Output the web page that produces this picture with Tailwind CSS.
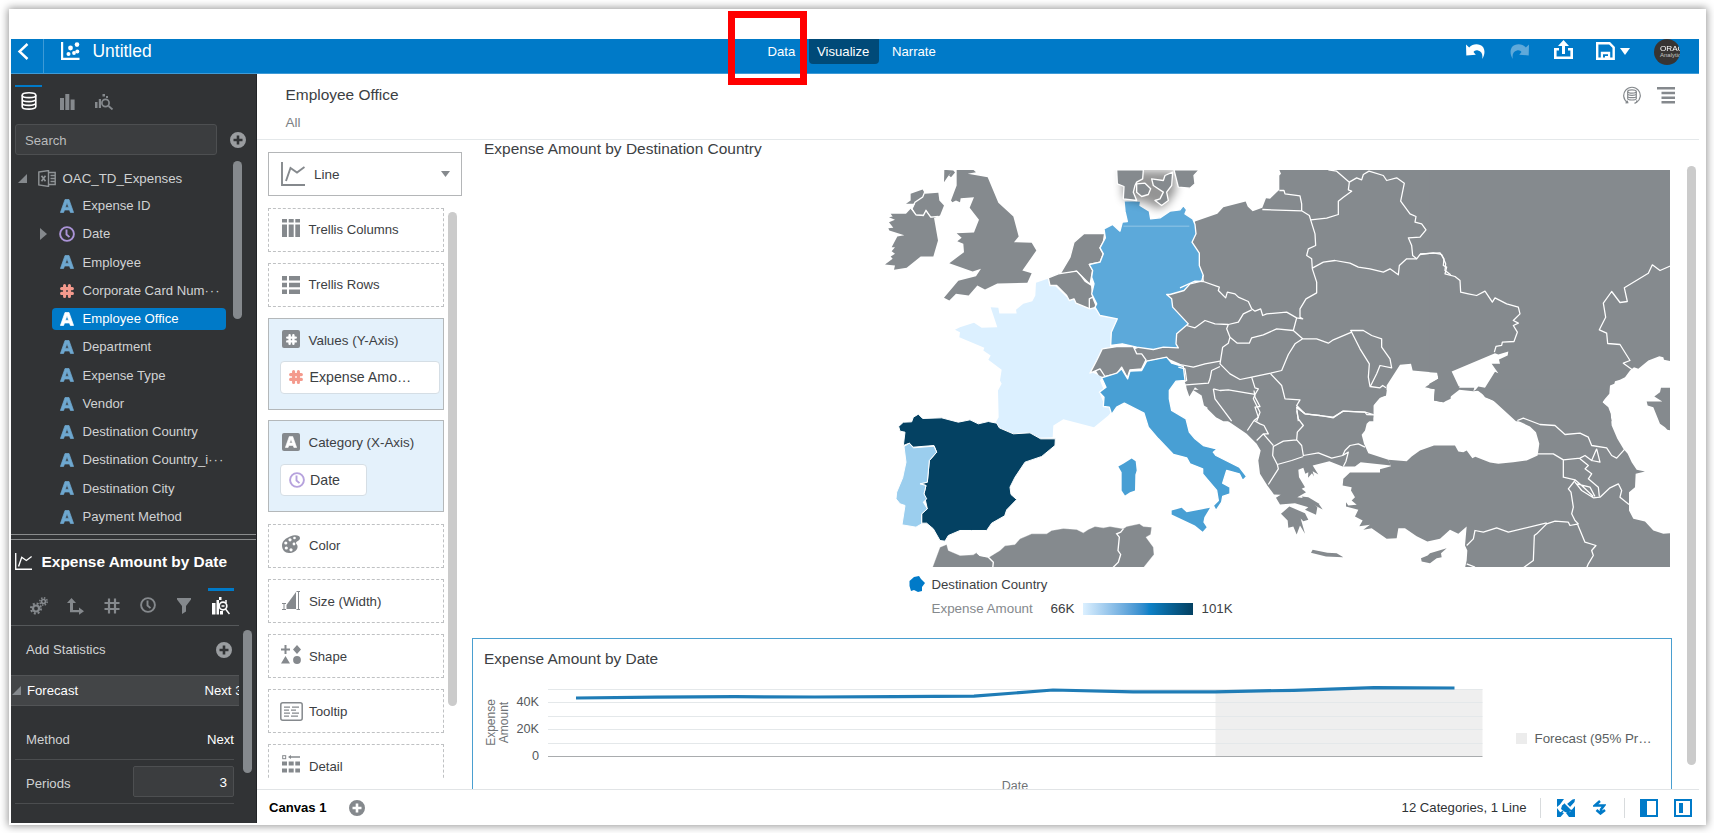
<!DOCTYPE html>
<html lang="en">
<head>
<meta charset="utf-8">
<title>Untitled - Analytics</title>
<script src="https://cdn.jsdelivr.net/npm/@tailwindcss/browser@4"></script>
</head>
<body class="h-[833px] w-[1714px] overflow-hidden bg-white pt-[9px] pl-[9px] font-['Liberation_Sans',Arial,sans-serif] text-[13.15px] text-[#3c4043]">
<svg class="hidden">
  <symbol id="i-text" viewBox="0 0 14 14"><path fill="currentColor" stroke="currentColor" stroke-width=".7" fill-rule="evenodd" d="M5 .5h4L13.600 13.500h-3.200L9.500 11H4.500L3.600 13.500H.4zM7 3.700L5.400 8.200h3.200z"/></symbol>
  <symbol id="i-hash" viewBox="0 0 14 14"><path stroke="currentColor" stroke-width="3.100" fill="none" stroke-linecap="round" d="M4.600 1.600v10.800M9.400 1.600v10.800M1.600 4.600h10.800M1.600 9.400h10.800"/></symbol>
  <symbol id="i-clock" viewBox="0 0 16 16"><circle cx="8" cy="8" r="6.900" fill="none" stroke="currentColor" stroke-width="1.900"/><path fill="none" stroke="currentColor" stroke-width="1.900" d="M7.500 3.500v5l3 2.600"/></symbol>
  <symbol id="i-plus" viewBox="0 0 16 16"><path fill="currentColor" fill-rule="evenodd" d="M8 0a8 8 0 1 0 0 16A8 8 0 0 0 8 0zM6.700 3.500h2.600v3.200h3.200v2.600H9.300v3.200H6.700V9.300H3.500V6.700h3.200z"/></symbol>
  <symbol id="i-line" viewBox="0 0 24 24"><path fill="none" stroke="currentColor" stroke-width="1.900" d="M1 0v23h23M5 19L9.500 6l6.500 4.500L23.500 5"/></symbol>
</svg>

<div class="flex h-[816px] w-[1697px] flex-col bg-white px-[2px] pt-[30px] shadow-[0_0_8px_1px_rgba(0,0,0,0.42)]">
  <header class="flex h-[34.500px] w-[1688px] shrink-0 border-b border-[#3f9bd7] bg-[#007ac8] text-white">
    <div class="flex w-[33px] justify-center border-r border-[#3d9ad6] pt-[4px] pr-[8px]">
      <svg class="h-[17px] w-[12px]" viewBox="0 0 12 17"><path fill="none" stroke="#fff" stroke-width="2.400" d="M10.500 1L2.500 8.500l8 7.500"/></svg>
    </div>
    <svg class="mt-[3px] ml-[17px] h-[19px] w-[19px]" viewBox="0 0 19 19" fill="#fff"><path d="M0 0h2.200v15.800H18.500V18H0z"/><circle cx="7.500" cy="12" r="2"/><circle cx="9.500" cy="6" r="2.400"/><circle cx="13" cy="11" r="1.900"/><circle cx="16.300" cy="9.500" r="2"/><circle cx="16" cy="2.600" r="2.300"/></svg>
    <div class="ml-[12.500px] w-[663px] pt-px text-[17.450px] leading-[23px]">Untitled</div>
    <nav class="flex h-[25px] leading-[26px]">
      <div class="w-[53px] pl-[12px]">Data</div>
      <div class="w-[70px] rounded-b-[4px] bg-[#004a78] pl-[8.500px]">Visualize</div>
      <div class="pl-[13.500px]">Narrate</div>
    </nav>
    <div class="ml-auto flex items-start pr-[19px]">
      <svg class="mt-[5px] h-[16px] w-[19px]" viewBox="0 0 19 16" fill="#fff"><path d="M0 .5l3.200 3C7-1 14-.5 17 3c2.300 3.500 1.800 8-.8 12C17 10 15.500 7.200 12 6.500 9.500 6 8.500 7 7.500 8l2.300 2.700L.3 11.500z"/></svg>
      <svg class="mt-[5px] ml-[25px] h-[16px] w-[19px] -scale-x-100" viewBox="0 0 19 16" fill="#5fa9da"><path d="M0 .5l3.200 3C7-1 14-.5 17 3c2.300 3.500 1.800 8-.8 12C17 10 15.500 7.200 12 6.500 9.500 6 8.500 7 7.500 8l2.300 2.700L.3 11.500z"/></svg>
      <svg class="mt-[1px] ml-[25px] h-[20px] w-[19px]" viewBox="0 0 19 20" fill="#fff"><path d="M9.500 0l5.500 6h-4v8H8V6H4zM0 8h5v2.500H2.600v6h13.800v-6H14V8h5v11H0z"/></svg>
      <svg class="mt-[3px] ml-[23.500px] h-[18px] w-[19px]" viewBox="0 0 19 18"><path fill="none" stroke="#fff" stroke-width="2.400" d="M1.200 1.200h12.300l4.200 4.300v11.300H1.200z"/><path fill="#fff" fill-rule="evenodd" d="M4.800 9.800h9.400V17H4.800zM7 12.200v4.300h2V14h3v-1.800z"/></svg>
      <svg class="mt-[9px] ml-[5px] h-[7px] w-[10px]" viewBox="0 0 10 7"><path fill="#fff" d="M0 0h10L5 7z"/></svg>
      <div class="ml-[24px] flex h-[26px] w-[26px] flex-col items-start justify-center overflow-hidden rounded-full bg-[#373433] pl-[6px] whitespace-nowrap">
        <span class="origin-left scale-x-125 text-[6.500px] leading-[7px] text-white">ORACLE</span>
        <span class="text-[6px] leading-[7px] text-[#c9c6c4]">Analytics</span>
      </div>
    </div>
  </header>

  <div class="flex min-h-0 w-[1688px] grow pb-[2px]">
    <aside class="flex w-[246px] shrink-0 flex-col overflow-hidden border-r border-[#222427] bg-[#313335] text-[#d0d2d3]">
      <div class="flex h-[49px] shrink-0 pl-[4px] text-[#85898d]">
        <div class="mt-[11px] flex w-[27px] justify-center border-t-[2.500px] border-[#007ac8] pt-[5px]">
          <svg class="h-[18px] w-[16px]" viewBox="0 0 16 18" fill="none" stroke="#fff" stroke-width="1.600"><ellipse cx="8" cy="3.200" rx="6.800" ry="2.400"/><path d="M1.200 3.200v11.500c0 3.200 13.600 3.200 13.600 0V3.200M1.200 7.200c0 3.200 13.600 3.200 13.600 0M1.200 11c0 3.200 13.600 3.200 13.600 0"/></svg>
        </div>
        <svg class="mt-[20px] ml-[18px] h-[16px] w-[15px]" viewBox="0 0 15 16" fill="currentColor"><path d="M0 4h4v12H0zM5.300 0h4v16h-4zM10.600 5.500h4V16h-4z"/></svg>
        <svg class="mt-[20px] ml-[20px] h-[16px] w-[19px]" viewBox="0 0 19 16"><path fill="currentColor" d="M0 8h2.500v6H0zM3.800 5H6v9H3.800zM7.500 0H10v2.500H7.500zM11 2h2v2h-2z"/><circle cx="10.500" cy="9" r="3.600" fill="none" stroke="currentColor" stroke-width="1.700"/><path stroke="currentColor" stroke-width="1.800" d="M13.500 12l4 3.500"/></svg>
      </div>
      <div class="flex h-[34px] shrink-0 items-center pl-[4px]">
        <div class="h-[31.500px] w-[202px] rounded-[3px] border border-[#4d4f51] bg-[#3b3d3f] pl-[9px] leading-[31px] text-[#b9bbbc]">Search</div>
        <svg class="ml-[12.500px] h-[16px] w-[16px] text-[#9a9da0]"><use href="#i-plus"/></svg>
      </div>
      <div class="flex h-[378px] shrink-0 overflow-hidden border-b border-[#8a8c8d]">
        <div class="w-[221px] shrink-0 pt-[8.500px]">
          <div class="flex h-[27.500px] items-center pl-[7px]">
            <svg class="h-[9px] w-[9px]" viewBox="0 0 9 9"><path fill="#85898d" d="M9 0v9H0z"/></svg>
            <svg class="ml-[11px] h-[17px] w-[18px]" viewBox="0 0 18 17" fill="none" stroke="#8f9396" stroke-width="1.400"><path d="M.8 2L10.500.6v15.800L.8 15zM10.500 2.500h6.700v12h-6.700M12.500 5.500h4.500M12.500 8.500h4.500M12.500 11.500h4.500"/><path stroke-width="1.700" d="M3.500 5.800l4 5.500M7.500 5.800l-4 5.500"/></svg>
            <span class="ml-[6.500px] text-[13.300px]">OAC_TD_Expenses</span>
          </div>
          <div class="flex h-[27.500px] items-center pl-[49px] text-[#6ea8d0]"><svg class="h-[14px] w-[14px]"><use href="#i-text"/></svg><span class="ml-[8.500px] text-[#d0d2d3]">Expense ID</span></div>
          <div class="flex h-[28.250px] items-center pl-[29px] text-[#ab94d8]"><svg class="h-[12px] w-[7px]" viewBox="0 0 7 12"><path fill="#85898d" d="M0 0l7 6-7 6z"/></svg><svg class="ml-[12px] h-[16px] w-[16px]"><use href="#i-clock"/></svg><span class="ml-[7.500px] text-[#d0d2d3]">Date</span></div>
          <div class="flex h-[28.250px] items-center pl-[49px] text-[#6ea8d0]"><svg class="h-[14px] w-[14px]"><use href="#i-text"/></svg><span class="ml-[8.500px] text-[#d0d2d3]">Employee</span></div>
          <div class="flex h-[28.250px] items-center pl-[49px] text-[#f49a8d]"><svg class="h-[14px] w-[14px]"><use href="#i-hash"/></svg><span class="ml-[8.500px] text-[#d0d2d3]">Corporate Card Num<span class="tracking-[1px]">···</span></span></div>
          <div class="my-[3px] ml-[40.500px] flex h-[22.250px] w-[174px] items-center rounded-[4px] bg-[#007ac8] pl-[8.500px] text-white"><svg class="h-[14px] w-[14px]"><use href="#i-text"/></svg><span class="ml-[8.500px]">Employee Office</span></div>
          <div class="flex h-[28.250px] items-center pl-[49px] text-[#6ea8d0]"><svg class="h-[14px] w-[14px]"><use href="#i-text"/></svg><span class="ml-[8.500px] text-[#d0d2d3]">Department</span></div>
          <div class="flex h-[28.250px] items-center pl-[49px] text-[#6ea8d0]"><svg class="h-[14px] w-[14px]"><use href="#i-text"/></svg><span class="ml-[8.500px] text-[#d0d2d3]">Expense Type</span></div>
          <div class="flex h-[28.250px] items-center pl-[49px] text-[#6ea8d0]"><svg class="h-[14px] w-[14px]"><use href="#i-text"/></svg><span class="ml-[8.500px] text-[#d0d2d3]">Vendor</span></div>
          <div class="flex h-[28.250px] items-center pl-[49px] text-[#6ea8d0]"><svg class="h-[14px] w-[14px]"><use href="#i-text"/></svg><span class="ml-[8.500px] text-[#d0d2d3]">Destination Country</span></div>
          <div class="flex h-[28.250px] items-center pl-[49px] text-[#6ea8d0]"><svg class="h-[14px] w-[14px]"><use href="#i-text"/></svg><span class="ml-[8.500px] text-[#d0d2d3]">Destination Country_i<span class="tracking-[1px]">···</span></span></div>
          <div class="flex h-[28.250px] items-center pl-[49px] text-[#6ea8d0]"><svg class="h-[14px] w-[14px]"><use href="#i-text"/></svg><span class="ml-[8.500px] text-[#d0d2d3]">Destination City</span></div>
          <div class="flex h-[28.250px] items-center pl-[49px] text-[#6ea8d0]"><svg class="h-[14px] w-[14px]"><use href="#i-text"/></svg><span class="ml-[8.500px] text-[#d0d2d3]">Payment Method</span></div>
        </div>
        <div class="mt-[4.500px] ml-[0.500px] h-[158px] w-[9px] rounded-full bg-[#85898d]"></div>
      </div>
      <div class="mt-[4px] flex h-[45px] shrink-0 items-center border-t border-[#8a8c8d] pl-[4px] text-[15.450px] font-bold text-white">
        <svg class="h-[17px] w-[17px]"><use href="#i-line"/></svg><span class="ml-[9.500px]">Expense Amount by Date</span>
      </div>
      <div class="flex h-[42px] w-[228px] shrink-0 border-b border-[#55585a] pt-[2px] pl-[19px] text-[#85898d]">
        <svg class="mt-[11px] h-[18px] w-[18px]" viewBox="0 0 18 18" fill="none" stroke="currentColor"><circle cx="6" cy="11.500" r="3" stroke-width="2.200"/><circle cx="6" cy="11.500" r="5" stroke-width="2" stroke-dasharray="2 1.930"/><circle cx="13.500" cy="4.500" r="2" stroke-width="1.700"/><circle cx="13.500" cy="4.500" r="3.700" stroke-width="1.500" stroke-dasharray="1.500 1.400"/></svg>
        <svg class="mt-[12px] ml-[19px] h-[17px] w-[17px]" viewBox="0 0 17 17" fill="currentColor"><path d="M4.500 0L9 5H6v7h6V9.500l5 3.700-5 3.600v-2.500H3V5H0z"/></svg>
        <svg class="mt-[12px] ml-[20px] h-[16px] w-[16px]" viewBox="0 0 16 16"><path stroke="currentColor" stroke-width="2.200" d="M5 .5v15M11 .5v15M.5 5h15M.5 11h15"/></svg>
        <svg class="mt-[11.500px] ml-[20px] h-[16px] w-[16px]"><use href="#i-clock"/></svg>
        <svg class="mt-[12px] ml-[21px] h-[16px] w-[14px]" viewBox="0 0 14 16" fill="currentColor"><path d="M0 0h14v1.500L9 8v5.500L5 16V8L0 1.500z"/></svg>
        <div class="mt-[2px] ml-[17px] h-[36px] w-[26px] border-t-[3px] border-[#007ac8] pt-[6px] pl-[4px]">
          <svg class="h-[18px] w-[18px]" viewBox="0 0 18 18" fill="none"><path fill="#fff" d="M0 6h3.500v11.500H0zM4.500 3h2.500v14.500H4.500zM7 0h2.500v3H7z"/><path fill="#fff" d="M8 14h3v3.500H8z"/><circle cx="11" cy="9" r="3.800" stroke="#fff" stroke-width="1.700"/><path stroke="#fff" stroke-width="1.500" d="M13.500 12l4 5M14 3v3M9.500 9h3"/></svg>
        </div>
      </div>
      <div class="flex h-[197px]">
        <div class="w-[228px]">
          <div class="flex h-[49px] items-center justify-between pr-[7px] pl-[15px]"><span>Add Statistics</span><svg class="h-[16px] w-[16px] text-[#9a9da0]"><use href="#i-plus"/></svg></div>
          <div class="flex h-[31px] items-center overflow-hidden border-y border-[#525456] bg-[#434547] pt-px pl-px whitespace-nowrap text-white"><svg class="h-[9px] w-[9px] shrink-0" viewBox="0 0 9 9"><path fill="#85898d" d="M9 0v9H0z"/></svg><span class="ml-[6px] w-[177.500px] shrink-0">Forecast</span><span class="shrink-0">Next 3</span></div>
          <div class="mr-[5px] ml-[4px] flex h-[54px] items-end justify-between border-b-[1.500px] border-[#4b4d4f] pb-[9px] pl-[11px]"><span>Method</span><span class="text-white">Next</span></div>
          <div class="mr-[5px] ml-[4px] flex h-[44.500px] items-center justify-between border-b-[1.500px] border-[#4b4d4f] pl-[11px]"><span class="pt-[5px]">Periods</span><span class="h-[31px] w-[101px] rounded-[2px] border border-[#4d4f51] bg-[#3b3d3f] pr-[6px] text-right text-[13.500px] leading-[31px] text-white">3</span></div>
        </div>
        <div class="mt-[4px] ml-[4px] h-[143px] w-[9px] rounded-full bg-[#85898d]"></div>
      </div>
    </aside>

    <main class="flex min-w-0 grow flex-col">
      <div class="flex h-[66.500px] shrink-0 justify-between border-b-[1.500px] border-[#e4e8ea]">
        <div class="pt-[10.500px] pl-[28.500px]">
          <div class="text-[15.450px] leading-[22px]">Employee Office</div>
          <div class="mt-[7px] text-[13.500px] leading-[20px] text-[#7d8184]">All</div>
        </div>
        <div class="flex pt-[12px] pr-[24px]">
          <svg class="h-[18px] w-[18px]" viewBox="0 0 18 18" fill="none" stroke="#85898d" stroke-width="1.200"><path d="M4.500 16.500a8.300 8.300 0 1 1 9 0M2.500 16.800l2.300-.2-.6-2M11.500 17.400l2-1 .4-2"/><ellipse cx="9" cy="5.500" rx="4.300" ry="1.600"/><path d="M4.700 5.500v7c0 2 8.600 2 8.600 0v-7M4.700 7.800c0 2 8.600 2 8.600 0M4.700 10.200c0 2 8.600 2 8.600 0"/></svg>
          <svg class="mt-[1px] ml-[16px] h-[17px] w-[18px]" viewBox="0 0 18 17" fill="#85898d"><path d="M0 0h18v2.500H0zM4.500 4.700H18v2.500H4.500zM4.500 9.400H18v2.500H4.500zM4.500 14.100H18v2.500H4.500z"/></svg>
        </div>
      </div>

      <div class="flex h-[650px] shrink-0 border-b-[1.500px] border-[#e1e4e6]">
        <section class="w-[214.500px] shrink-0 pt-[12px] pl-[11px]">
          <div class="flex h-[44px] w-[193.500px] items-center border border-[#b4b6b8] pr-[11px] pl-[12px] text-[#85898d]">
            <svg class="h-[24px] w-[24px]"><use href="#i-line"/></svg><span class="ml-[9px] grow pt-[2px] text-[13.500px] text-[#3c4043]">Line</span><svg class="h-[6px] w-[9px]" viewBox="0 0 9 6"><path fill="#85898d" d="M0 0h9L4.500 6z"/></svg>
          </div>
          <div class="mt-[11.500px] flex h-[570.500px] overflow-hidden text-[#85898d]">
            <div class="flex w-[176px] shrink-0 flex-col gap-[11px] *:shrink-0">
              <div class="flex h-[44px] items-center border border-dashed border-[#bfc1c3] pl-[13px]"><svg class="-mt-1 h-[18px] w-[18px]" viewBox="0 0 18 18" fill="currentColor"><path d="M0 0h5v3.500H0zM6.700 0h5v3.500h-5zM13.300 0h4.700v3.500h-4.700zM0 5.500h5V18H0zM6.700 5.500h5V18h-5zM13.300 5.500h4.700V18h-4.700z"/></svg><span class="ml-[8.500px] pt-px text-[#3c4043]">Trellis Columns</span></div>
              <div class="flex h-[44px] items-center border border-dashed border-[#bfc1c3] pl-[13px]"><svg class="h-[18px] w-[18px]" viewBox="0 0 18 18" fill="currentColor"><path d="M0 0h5v4.500H0zM7 0h11v4.500H7zM0 6.700h5v4.500H0zM7 6.700h11v4.500H7zM0 13.500h5V18H0zM7 13.500h11V18H7z"/></svg><span class="ml-[8.500px] pt-px text-[#3c4043]">Trellis Rows</span></div>
              <div class="h-[92px] border border-[#b4b8ba] bg-[#e4f1fb] pt-[11.500px] pl-[13px]">
                <div class="flex h-[18px] items-center"><span class="flex h-[18px] w-[18px] items-center justify-center rounded-[2px] bg-[#85898d] text-white"><svg class="h-[11px] w-[11px]"><use href="#i-hash"/></svg></span><span class="ml-[8.500px] pt-[4px] text-[13.400px] text-[#3c4043]">Values (Y-Axis)</span></div>
                <div class="mt-[12.500px] -ml-[2px] flex h-[33.500px] w-[159.500px] items-center rounded-[4px] border border-[#d5dee5] bg-white pl-[8px] text-[#f49a8d]"><svg class="h-[14px] w-[14px]"><use href="#i-hash"/></svg><span class="ml-[6.500px] pt-px text-[14.200px] text-[#3c4043]">Expense Amo…</span></div>
              </div>
              <div class="-mt-[1px] h-[92px] border border-[#b4b8ba] bg-[#e4f1fb] pt-[12px] pl-[13px]">
                <div class="flex h-[18px] items-center"><span class="flex h-[18px] w-[18px] items-center justify-center rounded-[2px] bg-[#85898d] text-white"><svg class="h-[12px] w-[12px]"><use href="#i-text"/></svg></span><span class="ml-[8.500px] pt-[4px] text-[13.400px] text-[#3c4043]">Category (X-Axis)</span></div>
                <div class="mt-[13px] -ml-[2px] flex h-[32px] w-[86.500px] items-center rounded-[4px] border border-[#d5dee5] bg-white pl-[7.500px] text-[#b6a2dd]"><svg class="h-[16px] w-[16px]"><use href="#i-clock"/></svg><span class="ml-[5.500px] pt-[2px] text-[14.200px] text-[#3c4043]">Date</span></div>
              </div>
              <div class="mt-[1px] flex h-[44px] items-center border border-dashed border-[#bfc1c3] pl-[13px]"><svg class="-mt-1 h-[18px] w-[18px]" viewBox="0 0 18 18"><path fill="currentColor" d="M8 1.500C12-.5 18-.5 18 3c0 3-4 3-4 5 0 1.500 2 1.500 1.500 4.500C15 16 11 18 7 18 3 18 0 15 0 10.500 0 6 4 3 8 1.500z"/><g fill="#fff"><circle cx="3.800" cy="8" r="1.600"/><circle cx="4.300" cy="13" r="1.600"/><circle cx="8" cy="4.800" r="1.600"/><circle cx="9" cy="14.800" r="1.600"/><circle cx="12.500" cy="3" r="1.300"/><circle cx="12" cy="9" r="1.400"/></g></svg><span class="ml-[9px] pt-px text-[#3c4043]">Color</span></div>
              <div class="flex h-[44px] items-center border border-dashed border-[#bfc1c3] pl-[13px]"><svg class="h-[19px] w-[18px]" viewBox="0 0 18 19"><path fill="currentColor" d="M4.500 18V14L14 1v17z"/><path fill="none" stroke="currentColor" d="M0 12.500h4M2 12.500v6M0 18.500h4M14.500.5H18M16.500.5v18M14.500 18.500H18"/></svg><span class="ml-[9px] pt-[2px] text-[13.300px] text-[#3c4043]">Size (Width)</span></div>
              <div class="mt-[0.500px] flex h-[44px] items-center border border-dashed border-[#bfc1c3] pl-[12px]"><svg class="-mt-1 h-[19px] w-[20px]" viewBox="0 0 20 19" fill="currentColor"><path d="M3.500 0h2v3.500H9v2H5.500V9h-2V5.500H0v-2h3.500zM16 0l4 4.500L16 9l-4-4.500zM4.500 11l4.500 7.500H0z"/><circle cx="16" cy="15" r="3.900"/></svg><span class="ml-[8px] pt-px text-[#3c4043]">Shape</span></div>
              <div class="flex h-[44px] items-center border border-dashed border-[#bfc1c3] pl-[11px]"><svg class="h-[19px] w-[23px]" viewBox="0 0 23 19" fill="none" stroke="currentColor"><rect x=".8" y=".8" width="21.400" height="17.400" rx="2" stroke-width="1.500"/><path stroke-width="1.300" d="M4 5.200h6M12 5.200h7M4 8.200h5M11 8.200h5M4 11.200h6M12 11.200h7M4 14.200h5M11 14.200h7"/></svg><span class="ml-[6px] pt-[2px] text-[13.300px] text-[#3c4043]">Tooltip</span></div>
              <div class="flex h-[44px] items-center border border-dashed border-[#bfc1c3] pl-[13px]"><svg class="-mt-1 h-[18px] w-[18px]" viewBox="0 0 18 18" fill="currentColor"><path d="M0 6.500h5v4H0zM6.700 6.500h5v4h-5zM13.300 6.500h4.700v4h-4.700zM0 13.500h5v4H0zM6.700 13.500h5v4h-5zM13.300 13.500h4.700v4h-4.700zM6 2l3-2v1.300h9v1.400H9V4z"/><rect x=".7" y=".7" width="3" height="3" fill="none" stroke="currentColor"/></svg><span class="ml-[9px] pt-[2px] text-[13.200px] text-[#3c4043]">Detail</span></div>
            </div>
            <div class="mt-[4px] ml-[4px] h-[494px] w-[9px] rounded-full bg-[#cbcbcb]"></div>
          </div>
        </section>

        <section class="flex w-[1200px] shrink-0 flex-col overflow-hidden">
          <div class="pl-[12.500px] text-[15.480px] leading-[18px]">Expense Amount by Destination Country</div>
          <svg class="mt-[11.500px] ml-[413.500px] h-[397.500px] w-[785px] shrink-0" viewBox="885 169.500 785 397.500">
            <defs>
              <filter id="soft" x="-50%" y="-50%" width="200%" height="200%"><feGaussianBlur stdDeviation="14"/></filter>
              <clipPath id="dk"><rect x="715" y="0" width="300" height="215"/></clipPath>
            </defs>
            <g fill="#858a8e" stroke="none">
              <g transform="translate(1180 150) scale(.33333)">
                <path d="M298 58L303 70 298 75V118L270 145 258 143 247 172 218 182 203 168 197 153 130 170 112 190 45 213 20 300 30 400-40 432-60 560-120 590-160 605-240 590-265 640-240 680-180 670-150 640-45 620 0 640 12 690 18 703 20 715 28 738 45 710 65 725 70 750 85 765 82 775 108 800 130 812H580V765L603 738 618 735 620 705 660 643 693 640 698 660 772 667 775 685 735 710 765 716 762 750 790 755 812 745V58z"/>
              </g>
              <g transform="translate(1430 150) scale(.33333)">
                <path d="M-2 58H722V632L702 628 700 620 688 617 655 630 625 655 612 650 600 660 585 680 570 688 555 692 553 700 540 705 538 730 525 745 517 755 530 770 540 785 545 812H258L190 750 165 740 150 720 130 722 88 718 40 755 12 750 15 716-2 713V700L25 685 22 665-2 665z"/>
                <path d="M722 712H693L690 725 673 738 697 753 650 753 653 765 670 770 690 820 705 830 712 838 722 840z"/>
                <path fill="#fff" d="M65 663L195 608 205 612 235 603 233 615 207 627 210 640 185 640 205 668 195 664 165 712 145 708 137 718 130 722 133 712 88 712z"/>
              </g>
              <g transform="translate(1240 390) scale(.33333)">
                <path d="M-142-2L-115 15-108 45-92 55-70 80-35 92 20 130 50 160 62 180 55 210 60 250 82 285 102 312 122 313 108 322 120 342 165 338 205 350 195 358 228 373 232 350 205 325 172 320 198 305 185 295 195 290 177 260 175 238 190 232 196 250 205 245 204 262 216 248 222 258 218 242 235 252 218 225 268 212 308 228 345 228 362 215 453 225 445 208 385 188 372 160 365 133 375 120 380 100 395 85 400 80V45L412 25 438 15 440-2z"/>
                <path d="M310 265L330 246 420 246V236L453 227 445 208 500 212 515 198 540 180 582 165 645 165 655 183 670 185 680 180 697 203 706 199 750 216 775 220 820 215 860 210 893 195 898 160 888 125 870 108 832 90 765 33 740 20 710-2H1105L1100 10 1087 35 1105 50 1112 70 1115 105 1132 145 1150 175 1163 190 1175 215 1190 238 1215 243 1187 250 1185 290 1167 305V360L1180 385 1215 393 1240 420 1270 430 1290 428V532H675L680 510 682 480 675 465 680 408 655 430 630 418 600 445 562 453 530 437 495 413 475 413 470 443 440 445 395 413 370 418 390 403 358 407 368 390 345 378 355 358 318 348 318 335 325 345 350 343 335 330 345 320 333 300 335 290 308 285z"/>
                <path d="M585-12L583 28 610 35 660-12z"/>
                <path d="M123 370L148 348 195 368 205 388 190 392 182 384 195 430 180 405 170 432 160 408 145 412 143 390z"/>
                <path d="M185 318L205 320 235 338 248 357 225 345 190 325z"/>
                <path d="M213 487L218 478 262 487 290 488 310 500 258 498z"/>
                <path d="M543 503L563 495 570 488 620 473 603 488 605 500 590 503 570 518 545 513z"/>
              </g>
              <g transform="translate(870 390) scale(.33333)">
                <path stroke="#fff" stroke-width="1" d="M187 532L210 470 230 462 235 480 270 495 310 493 320 486 328 495 357 500 390 480 405 466 435 462 450 445 485 430 530 430 545 420 580 414 620 417 640 427 655 417 675 408 700 412 720 408 760 415 770 408 808 400 820 408 845 410 842 432 828 440 850 470 852 492 820 532z"/>
                <path fill="none" stroke="#fff" stroke-width="4" d="M320 486L330 495 355 500 370 515 368 535M760 415L752 425 740 430 748 440 744 480 752 492 745 515 728 532"/>
              </g>
            </g>
            <g transform="translate(870 150) scale(.33333)" fill="#858a8e">
              <path d="M223 58L250 60 255 66 243 80 237 75 246 62 232 80 222 95zM260 58H310L318 65 293 70 353 80 385 157 430 198 446 258 432 275 485 277 499 300 457 360 485 368 472 397 382 399 345 417 322 405 296 435 258 430 238 450 222 442 265 391 318 377 333 355 308 363 238 338 282 305 280 280 262 272 275 262 260 248 312 246 327 208 299 172 312 140 272 143 270 155 258 150 247 155 243 150 260 105z"/>
              <path d="M62 190H108L122 175 140 195 160 195 168 180 182 200 192 202 204 270 190 318 152 318 110 352 72 358 75 345 45 342 68 325 62 318 75 310 65 302 75 290 65 290 82 258 103 254 58 240 55 233 70 232 57 215 75 208 57 200 68 198z"/>
              <path d="M165 130L205 127 208 150 222 165 210 195 190 203 180 195 168 178 160 193 138 193 128 175 135 160 108 160 122 150 122 130 158 117z"/>
              <path fill="none" stroke="#fff" stroke-width="4" d="M165 122L158 140 135 155 125 175 138 193 160 195 168 180 182 200 205 198"/>
              <path fill="#dcf0ff" d="M533 385L498 397 496 435 487 452 460 460 438 478 440 489 388 489 385 472 362 470 382 530 335 532 312 517 270 530 255 538 270 545 268 560 343 592 340 600 362 615 355 628 395 658 390 690 395 700 384 720 386 800 375 820 385 838 430 850 475 850 500 862 548 860 550 825 580 806 672 830 715 795 735 770 700 755 690 730 700 715 690 690 700 680 665 665 720 595 722 585 724 545 742 505 690 490 675 475 590 440z"/>
              <g stroke="#fff" stroke-width="4" stroke-linejoin="round">
                <path d="M642 249H704L700 275 690 292 700 310 690 335 658 342 668 360 660 402 620 362 568 374 600 320 612 275z"/>
                <path d="M535 382L565 370 600 365 620 362 635 378 645 392 665 405 668 440 680 470 660 475 618 458 612 445 598 450 590 435 560 405 540 405z"/>
                <path fill="none" d="M668 440L658 445 658 475"/>
                <path d="M697 595L740 588 790 588 800 610 815 610 828 628 815 655 780 658 772 682 755 650 740 670 705 678 690 655 660 668 680 630z"/>
                <path fill="#5ca9da" d="M762 150L812 152 810 165 838 182 842 205 870 202 900 182 930 178 940 165 950 178 945 190 968 205 975 222 978 250 966 275 988 308 988 345 1000 375 995 392 960 400 942 420 900 432 890 432 905 445 908 470 955 520 920 550 918 580 925 592 880 590 850 597 800 590 757 580 722 585 724 545 742 505 690 495 675 470 680 460 665 430 672 400 665 380 668 360 658 342 690 335 700 310 690 292 706 262 702 235 728 222 750 242 757 215 772 213 765 182z"/>
                <path fill="none" stroke-width="2" opacity=".5" d="M760 227H958"/>
                <path stroke="none" fill="#000" opacity=".42" filter="url(#soft)" clip-path="url(#dk)" d="M755 60H915L918 120 893 160 865 176 830 158 760 145z"/>
                <path d="M740 58L742 100 762 108 760 145 800 150 790 125 795 105 800 95 818 85 820 58zM800 100L825 98 842 115 835 132 815 138 800 125zM845 85L880 90 885 75 908 65 905 105 890 125 895 150 875 165 855 150 870 145 880 125 850 105zM912 58L925 110 960 113 975 100 972 75 988 58z"/>
                <path fill="#489fd4" d="M695 682L740 668 755 655 773 685 780 662 815 660 830 632 890 620 905 638 940 648 945 690 918 692 898 720 898 745 905 780 948 805 958 845 975 865 1000 885 1030 893 1042 895 1030 905 1038 915 1108 950 1130 978 1118 990 1108 970 1070 960 1058 998 1080 1010V1030L1058 1038 1055 1055 1038 1080 1030 1065 1045 1050 1040 1020 998 970V955L960 940 950 922 910 912 865 865 835 830 822 788 763 758 740 770 725 792 718 770 700 768 702 740 688 725 708 710z"/>
              </g>
            </g>
            <g transform="translate(870 390) scale(.33333)">
              <path fill="#489fd4" d="M745 228L760 220 785 204 797 212 800 240 796 253 795 300 780 305 765 315 755 300 755 245zM905 360L935 352 950 365 1020 352 1003 380 1000 395 1010 410 998 424 975 405 905 372z"/>
              <path fill="#044162" stroke="#fff" stroke-width="3" stroke-linejoin="round" d="M86 108L100 95 125 94 130 80 145 71 158 84 215 82 265 95 300 88 325 100 355 93 380 98 388 112 430 130 480 127 512 145 556 145 555 165 515 198 465 215 435 260 420 290 423 312 440 327 410 358 404 376 365 398 350 420 305 420 270 420 235 435 225 452 210 450 190 415 170 398 155 398 155 370 172 355 162 310 168 285 150 280 172 275 178 210 200 185 192 165 130 170 118 158 100 165 105 125 90 122z"/>
              <path fill="#9bceee" stroke="#fff" stroke-width="3" stroke-linejoin="round" d="M102 168L118 158 130 172 192 167 200 185 178 210 172 275 150 280 168 285 162 310 170 325 160 335 172 355 155 370V400L138 410 96 403 105 345 90 340 78 325 80 305 98 262 108 215z"/>
            </g>
            <g fill="none" stroke="#fff" stroke-width="3.800" stroke-linejoin="round">
              <g transform="translate(1180 150) scale(.33333)">
                <path d="M298 120L312 120 315 130 360 136 365 160 365 180M247 177L365 181 388 195 392 208 440 203 475 192 475 152 490 140 515 122 505 118 508 95 470 62 445 58M508 95L530 82 545 88 550 72 567 62 610 75 620 90 650 82 673 98 662 152 690 190 708 198 705 215 725 220 738 238 720 260 685 262 695 285 698 315 710 325 720 312 760 307 785 312 797 340 795 360 812 373"/>
                <path d="M392 208L405 250 407 285 385 295 380 315 395 325 397 355 410 395 410 427 378 445 360 475 360 500 368 505 350 502 320 485 260 490 248 495 242 475 225 482 215 475 205 453 175 440 165 430 142 425 137 442 115 420 118 410 70 393M397 353L430 335 465 330 510 338 535 350 570 355 610 365 630 355 655 373 658 345 680 325 710 325"/>
                <path d="M0 412L45 392 70 393 68 375M215 478L190 490 175 515 145 522 105 520 75 510 45 532 20 525M145 522L140 535 150 560 172 578H208L215 562 250 553 290 535 340 540 350 502M340 540L368 565 345 580 325 612 305 660 272 668 215 680 180 687 150 670 120 640 128 590 145 578 150 560M368 565L410 565 445 578 460 568 515 545 512 540 550 540 575 555 605 565 605 590 630 625 635 652 600 645 590 670 575 700 570 710M515 545L540 595 568 640 565 680 570 708 600 712 608 705 618 712M272 670L305 705 315 745 360 748 350 765 375 790 460 800 490 782 555 785 580 792"/>
                <path d="M0 642L40 650 75 640 120 632M-5 650L15 655 20 690 10 695M18 703L85 698 90 685 95 660 120 648M100 715L105 745 155 812M100 715L120 720 145 718 225 732 220 745 240 785 230 812M215 680L225 712 235 715 225 732M375 790L350 770 355 812"/>
              </g>
              <g transform="translate(1430 150) scale(.33333)">
                <path d="M-30 310L30 307 42 325 40 345 50 350 45 370 75 378 90 390 92 425 115 430 140 435 165 422 187 455 195 442 230 460 265 470 270 490 250 510 265 518 250 525 262 545 252 573 217 575 215 585 198 588 193 605M722 346L690 360 667 343 655 368 583 412 592 453 570 456 545 423 520 458 527 500 508 538 530 548 533 579 570 582 600 630 580 638 607 658"/>
              </g>
              <g transform="translate(1240 390) scale(.33333)">
                <path d="M170 50L195 70 240 75 280 82 308 62 375 65 380 72 402 73M170 60L175 85 190 105 172 125 170 148 185 165 190 195 235 187 275 203 308 195 315 180 330 165 355 160 375 170M308 195L325 185 318 212 310 228M170 148L130 152 100 168 98 195 112 222 155 210 190 198M112 222L115 235 85 282M100 165L70 130 50 150M22 120L42 90 60 100 72 105 85 130 70 130M42 90L55 80 45 50 60 48 45 20 42 0"/>
                <path d="M832 90L850 83 900 102 945 105 975 132 1020 128 1045 140 1055 165 1100 172 1115 195 1130 203 1155 175M893 190L940 190 970 208 1020 203 1035 195 1055 210 1070 175M1070 175L1080 215 1055 210M970 208V260L1005 268 1025 285 1060 318M1020 205L1045 225 1035 235 1055 250 1045 265 1075 290 1078 318M1005 275L1025 300 1060 322 1080 320 1110 292 1135 280 1145 300 1140 320 1167 342M1005 270L985 295 993 305 1000 350 995 370 1005 390 1015 400 990 405 985 395 945 392 920 400 890 430 883 435 880 510 850 532M920 397L805 425 770 412 730 425 705 420 700 445 680 465M1012 400L1035 455 1068 465 1055 480 1060 495 1045 520 1040 532M680 520L705 530M1010 280L1050 290 1065 318"/>
              </g>
            </g>
          </svg>
          <div class="mt-[9px] flex h-[16px] items-center pl-[437px]">
            <svg class="h-[16px] w-[16px]" viewBox="0 0 16 16"><path fill="#007ac8" d="M.5 5L5 1l5-1 2 3 4 4-3 4v4l-4 1-4-2-3 1-1.500-5z"/></svg><span class="ml-[7px] pt-px text-[13.200px]">Destination Country</span>
          </div>
          <div class="mt-[9px] flex h-[16px] items-center pl-[460px]">
            <span class="w-[119px] text-[13.400px] text-[#85898d]">Expense Amount</span><span class="w-[32px] text-[13.500px]">66K</span>
            <span class="h-[12px] w-[110px] bg-linear-to-r from-[#dcf0ff] via-[#0e82c8] via-60% to-[#044162]"></span><span class="ml-[9px] text-[13.300px]">101K</span>
          </div>
          <div class="mt-[20.500px] flex grow flex-col border-x-[1.500px] border-t-[1.500px] border-[#4a9fd0] pt-[11.500px]">
            <div class="pl-[11.500px] text-[15.450px] leading-[18px]">Expense Amount by Date</div>
            <div class="flex h-[150px]">
              <svg class="h-[130px] w-[1010px] shrink-0" viewBox="473 669 1010 130" font-size="13.300" fill="#6f7376">
                <rect x="1215.500" y="690" width="267" height="67" fill="#efefef"/>
                <path stroke="#e4e8ea" d="M548 690.500h934.500M548 703.500h934.500M548 717.500h934.500M548 730.500h934.500M548 744.500h934.500"/>
                <path stroke="#a9acae" d="M548 757.500h934.500"/>
                <path fill="none" stroke="#1f7cb6" stroke-width="3.200" d="M576 699L656 698.200 735 697.700 815 698 895 697.700 974 697.200 1053 691 1133 692.800 1215 692.800 1294 691.300 1374 688.600 1454.500 689"/>
                <g text-anchor="end" fill="#55595c" font-size="12.700"><text x="539" y="707">40K</text><text x="539" y="734">20K</text><text x="539" y="761">0</text></g>
                <g text-anchor="middle" font-size="12"><text transform="translate(494.500 723.500) rotate(-90)">Expense</text><text transform="translate(507.500 723.500) rotate(-90)">Amount</text></g>
                <text x="1015" y="791" text-anchor="middle" font-size="12.500">Date</text>
              </svg>
              <div class="mt-[62.500px] ml-[33.500px] flex h-[16px] items-center text-[13.350px] whitespace-nowrap text-[#5b5f62]"><span class="mr-[7.500px] h-[11px] w-[11px] bg-[#ececec]"></span>Forecast (95% Pr…</div>
            </div>
          </div>
        </section>
        <div class="mt-[26px] ml-[15px] h-[599px] w-[9px] rounded-full bg-[#cbcbcb]"></div>
      </div>

      <footer class="flex grow items-center pt-[2px] pr-[7px] pl-[12px] text-[#2f3235]">
        <span class="pt-px text-[13.100px] font-bold text-black">Canvas 1</span>
        <svg class="ml-[22.500px] h-[16px] w-[16px] text-[#85898d]"><use href="#i-plus"/></svg>
        <span class="ml-auto pt-px">12 Categories, 1 Line</span>
        <span class="ml-[13px] h-[20px] w-px bg-[#d8dbdd]"></span>
        <svg class="ml-[16px] h-[18px] w-[18px]" viewBox="0 0 18 18"><path fill="#007ac8" d="M0 0h7L3 5.500 0 8zM0 9l3 4 4 1-3.500 4H0zM18 7v11h-6l-3-4 4-1zM5 6.500L8 4l7 7-4 3-3-1-4-3zM10 5l5.500-4.500L18 0l-.5 3L13 8z"/><path fill="none" stroke="#fff" stroke-width="1.200" d="M8 4l6.500 6.500"/><path fill="none" stroke="#007ac8" stroke-width="1.500" d="M0 18l6-6"/></svg>
        <svg class="ml-[18px] h-[15px] w-[13px]" viewBox="0 0 13 15"><path fill="none" stroke="#007ac8" stroke-width="2.500" d="M7 1L2 5.500h9L8 9.500v4M3.500 10l4 3.500L12 10"/></svg>
        <span class="ml-[18px] h-[20px] w-px bg-[#d8dbdd]"></span>
        <svg class="ml-[15.500px] h-[18px] w-[18px]" viewBox="0 0 18 18"><path fill="#007ac8" fill-rule="evenodd" d="M0 0h18v18H0zM7 2v14h9V2z"/></svg>
        <svg class="ml-[16px] h-[18px] w-[18px]" viewBox="0 0 18 18"><path fill="#007ac8" fill-rule="evenodd" d="M0 0h18v18H0zM2 2v14h14V2zM5 4h4v10H5z"/></svg>
      </footer>
    </main>
  </div>
</div>
<div class="absolute top-[11px] left-[728px] h-[74px] w-[79px] border-[7px] border-[#ff0000]"></div>
</body>
</html>
